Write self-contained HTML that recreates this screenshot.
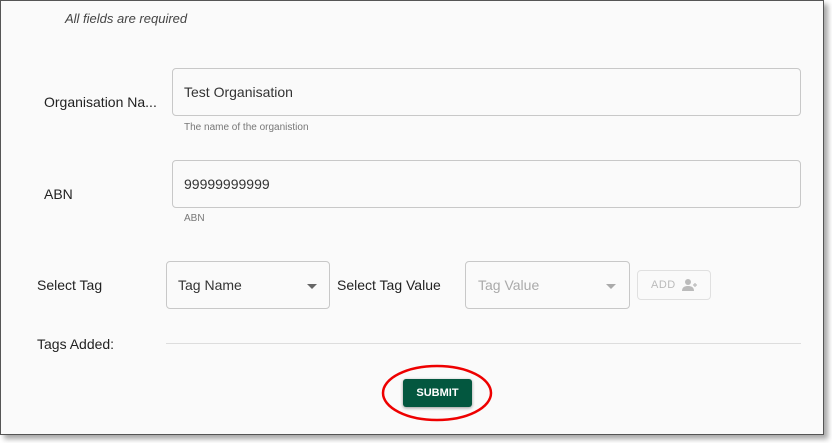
<!DOCTYPE html><html><head><style>
body{margin:0;width:832px;height:443px;background:#fff;position:relative;overflow:hidden;font-family:"Liberation Sans",sans-serif;}
.frame{position:absolute;left:0;top:0;width:822px;height:433px;border:1px solid #555;background:#fafafa;box-shadow:4px 4px 5px rgba(0,0,0,.35);}
.a{position:absolute;white-space:nowrap;}
.lbl{font-size:14px;color:#222;}
.box{position:absolute;border:1px solid #c8c8c8;border-radius:4px;background:#fafafa;box-sizing:border-box;}
.txt{font-size:14px;color:#333;}
.help{font-size:10px;color:#777;}
.arrow{position:absolute;width:0;height:0;border-left:5px solid transparent;border-right:5px solid transparent;border-top:5px solid #666;}
</style></head><body>
<div class="frame">
<div class="a" style="left:64px;top:10px;font-size:13px;font-style:italic;color:#444">All fields are required</div>
<div class="a lbl" style="left:43px;top:93px">Organisation Na...</div>
<div class="box" style="left:171px;top:67px;width:629px;height:48px"></div>
<div class="a txt" style="left:183px;top:83px">Test Organisation</div>
<div class="a help" style="left:183px;top:121px">The name of the organistion</div>
<div class="a lbl" style="left:43px;top:185px">ABN</div>
<div class="box" style="left:171px;top:159px;width:629px;height:48px"></div>
<div class="a txt" style="left:183px;top:175px">99999999999</div>
<div class="a help" style="left:183px;top:212px">ABN</div>
<div class="a lbl" style="left:36px;top:276px">Select Tag</div>
<div class="box" style="left:165px;top:260px;width:164px;height:48px"></div>
<div class="a txt" style="left:177px;top:276px">Tag Name</div>
<div class="arrow" style="left:306px;top:283px"></div>
<div class="a lbl" style="left:336px;top:276px">Select Tag Value</div>
<div class="box" style="left:464px;top:260px;width:165px;height:48px"></div>
<div class="a txt" style="left:477px;top:276px;color:#aaa">Tag Value</div>
<div class="arrow" style="left:605px;top:283px;border-top-color:#aaa"></div>
<div class="box" style="left:636px;top:269px;width:74px;height:30px;border-color:#e0e0e0"></div>
<div class="a" style="left:650px;top:278px;font-size:11px;color:#bbb;letter-spacing:.5px">ADD</div>
<svg class="a" style="left:681px;top:277px" width="16" height="14" viewBox="0 0 16 14"><circle cx="6" cy="4" r="3" fill="#bbb"/><path d="M0 13c0-4 3-5 6-5s6 1 6 5z" fill="#bbb"/><path d="M13 5v4M11 7h4" stroke="#bbb" stroke-width="1.2"/></svg>
<div class="a lbl" style="left:36px;top:335px">Tags Added:</div>
<div class="a" style="left:165px;top:342px;width:635px;height:1px;background:#ddd"></div>
<div class="a" style="left:402px;top:378px;width:69px;height:28px;background:#03573f;border-radius:3px;box-shadow:0 1px 3px rgba(0,0,0,.4);color:#fff;font-size:11px;font-weight:bold;text-align:center;line-height:28px">SUBMIT</div>
<svg class="a" style="left:377px;top:361px" width="118" height="64"><ellipse cx="59" cy="31" rx="54" ry="27" fill="none" stroke="#e00" stroke-width="2.5"/></svg>
</div>
</body></html>
